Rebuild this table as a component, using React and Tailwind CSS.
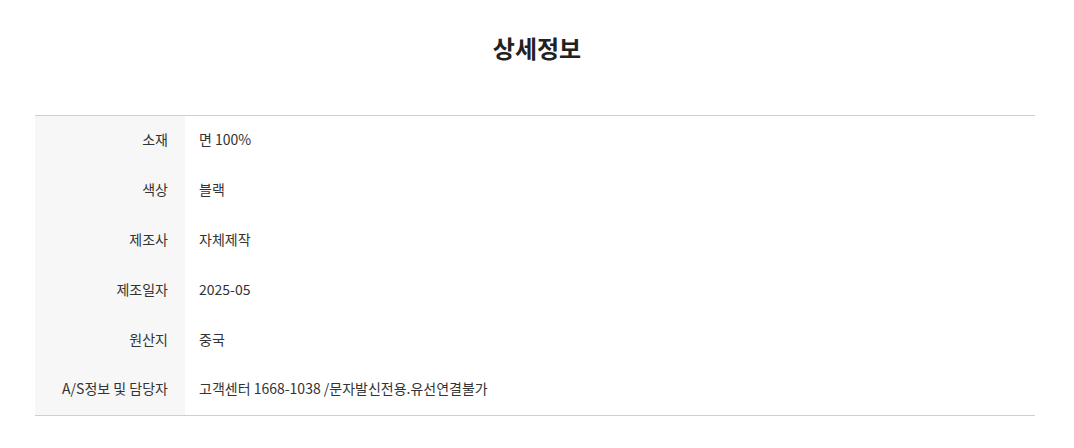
const rows = [
  ["소재", "면 100%"],
  ["색상", "블랙"],
  ["제조사", "자체제작"],
  ["제조일자", "2025-05"],
  ["원산지", "중국"],
  ["A/S정보 및 담당자", "고객센터 1668-1038 /문자발신전용.유선연결불가"],
];

export default function App() {
  return (
    <div
      className="w-[1074px] h-[448px] bg-white text-[#333]"
      style={{ fontFamily: '"Noto Sans CJK KR", "Noto Sans", sans-serif' }}
    >
      <div className="pt-[30px] px-[35px]">
        <h2 className="text-center text-[24px] leading-[36px] font-bold text-[#222]">
          상세정보
        </h2>
        <table className="mt-[49px] w-[1000px] border-collapse border-t border-b border-[#cfcfcf]">
          <tbody>
            {rows.map(([label, value]) => (
              <tr key={label} className="h-[50px]">
                <th className="w-[150px] bg-[#f7f7f7] pr-[17px] pb-[3px] text-right text-[14px] font-normal text-[#333] align-middle">
                  {label}
                </th>
                <td className="pl-[14px] pb-[3px] text-left text-[14px] text-[#333] align-middle">
                  {value}
                </td>
              </tr>
            ))}
          </tbody>
        </table>
      </div>
    </div>
  );
}
